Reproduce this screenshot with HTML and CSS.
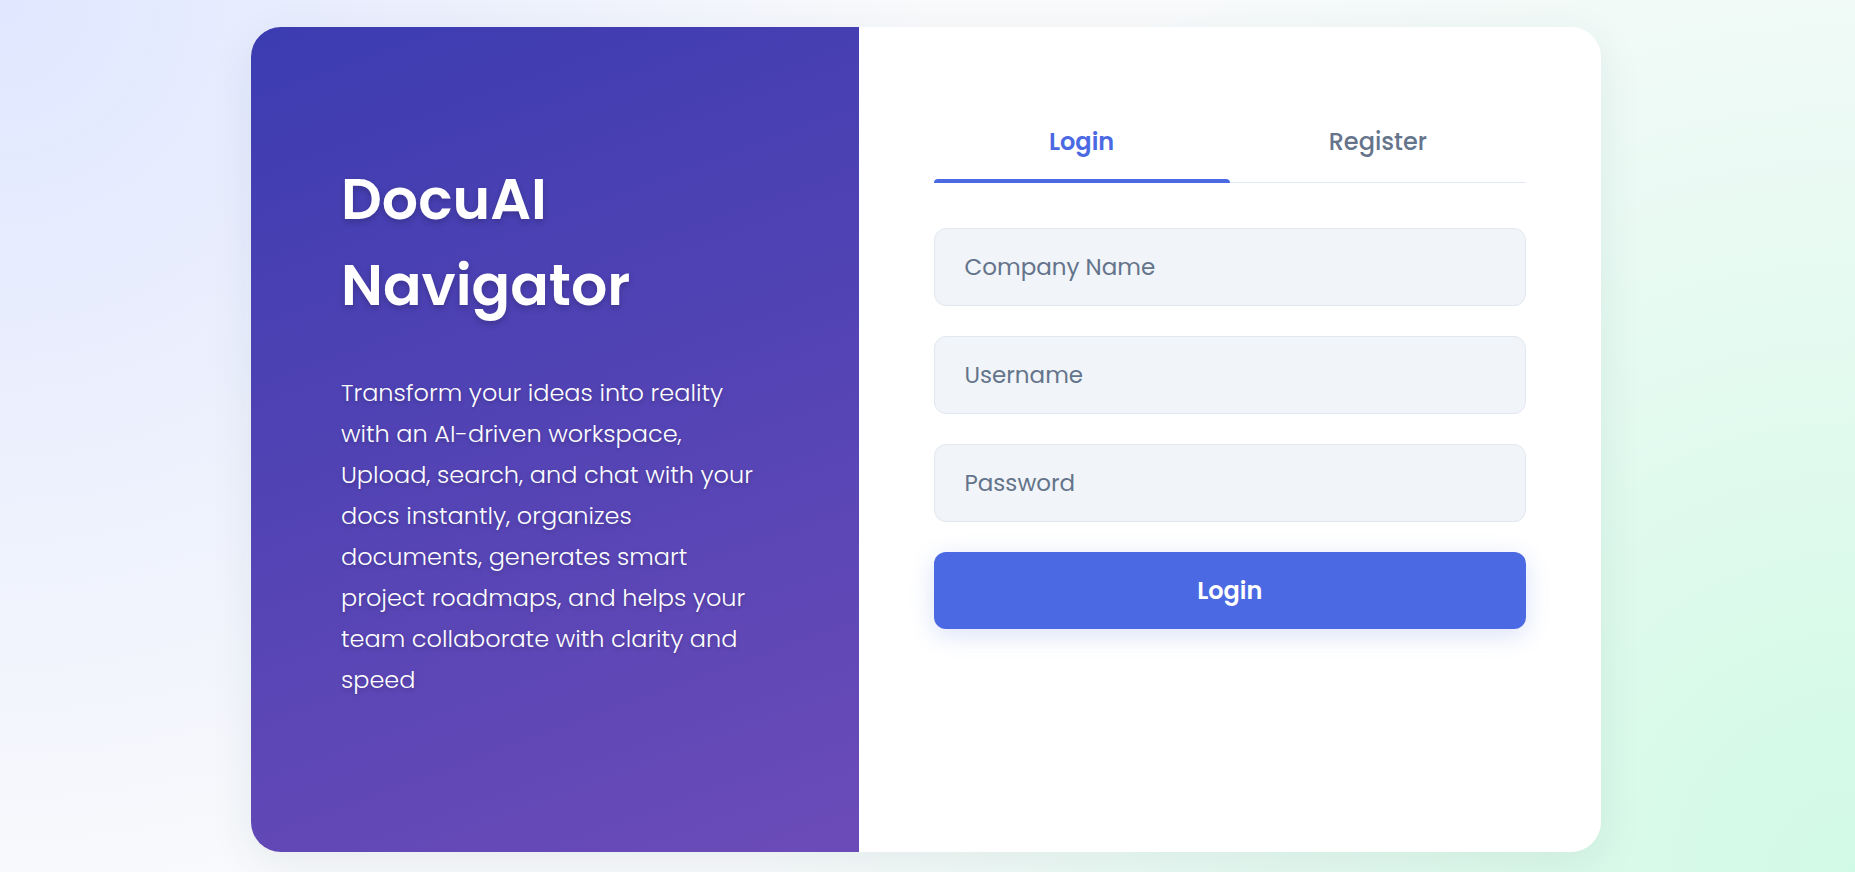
FILE: index.html
```html
<!DOCTYPE html>
<html lang="en">
<head>
<meta charset="utf-8">
<meta name="viewport" content="width=device-width, initial-scale=1">
<title>DocuAI Navigator</title>
<link rel="stylesheet" href="styles.css">
</head>
<body>
<main class="card">
  <section class="intro">
    <h1 class="intro-title">DocuAI Navigator</h1>
    <p class="intro-text">Transform your ideas into reality with an AI-driven workspace, Upload, search, and chat with your docs instantly, organizes documents, generates smart project roadmaps, and helps your team collaborate with clarity and speed</p>
  </section>
  <section class="panel">
    <div class="tabs" role="tablist">
      <button class="tab tab-active" type="button" role="tab" aria-selected="true">Login</button>
      <button class="tab" type="button" role="tab" aria-selected="false">Register</button>
    </div>
    <form class="form">
      <input class="field" type="text" name="company" placeholder="Company Name" aria-label="Company Name">
      <input class="field" type="text" name="username" placeholder="Username" aria-label="Username">
      <input class="field" type="password" name="password" placeholder="Password" aria-label="Password">
      <button class="submit" type="submit">Login</button>
    </form>
  </section>
</main>
</body>
</html>
```

FILE: styles.css
```css
* {
  box-sizing: border-box;
}

body {
  margin: 0;
  min-height: 100vh;
  padding: 27px 27px 20px 24px;
  display: flex;
  justify-content: center;
  font-family: Poppins, Inter, sans-serif;
  background-color: #f9fafc;
  background-image:
    radial-gradient(circle at top left, #e0e7ff, transparent 45%),
    radial-gradient(circle at bottom right, #d1fae5, transparent 54%);
}

.card {
  display: flex;
  width: 100%;
  max-width: 1350px;
  border-radius: 30px;
  overflow: hidden;
  background: #fff;
  box-shadow: 0 12px 45px rgba(30, 60, 80, 0.08);
}

.intro {
  flex: 0 0 45%;
  display: flex;
  flex-direction: column;
  justify-content: center;
  padding: 60px 90px 84px;
  color: #fff;
  background: linear-gradient(160deg, #3c3cb1, #6b4bb8);
}

.intro-title {
  margin: 0 0 44px;
  font-size: 57px;
  font-weight: 600;
  line-height: 86px;
  text-shadow: 0 3px 6px rgba(0, 0, 0, 0.2);
}

.intro-text {
  margin: 0;
  font-size: 24px;
  font-weight: 300;
  line-height: 41px;
  text-shadow: 0 2px 4px rgba(0, 0, 0, 0.2);
}

.panel {
  flex: 1;
  min-width: 0;
  padding: 75px;
}

.tabs {
  display: flex;
  margin-bottom: 45px;
  box-shadow: inset 0 -1px #e2e8f0;
}

.tab {
  position: relative;
  flex: 1;
  padding: 22px 0 23px;
  border: 0;
  background: none;
  font-family: inherit;
  font-size: 24px;
  font-weight: 500;
  line-height: 36px;
  color: #64748b;
}

.tab-active {
  font-weight: 600;
  color: #4b69e3;
}

.tab-active::after {
  content: "";
  position: absolute;
  left: 0;
  right: 0;
  bottom: 0;
  height: 4px;
  border-radius: 4px 4px 0 0;
  background: #4b69e3;
}

.form {
  display: flex;
  flex-direction: column;
  gap: 30px;
}

.field {
  width: 100%;
  padding: 21px 30px;
  border: 1px solid #e2e8f0;
  border-radius: 12px;
  background: #f1f5f9;
  font-family: inherit;
  font-size: 23px;
  line-height: 34px;
  color: #1e293b;
}

.field::placeholder {
  color: #64748b;
}

.submit {
  padding: 21px 30px 20px;
  border: 0;
  border-radius: 12px;
  background: #4b69e3;
  box-shadow: 0 6px 24px rgba(75, 105, 227, 0.2);
  font-family: inherit;
  font-size: 24px;
  font-weight: 600;
  line-height: 36px;
  color: #fff;
}
```
